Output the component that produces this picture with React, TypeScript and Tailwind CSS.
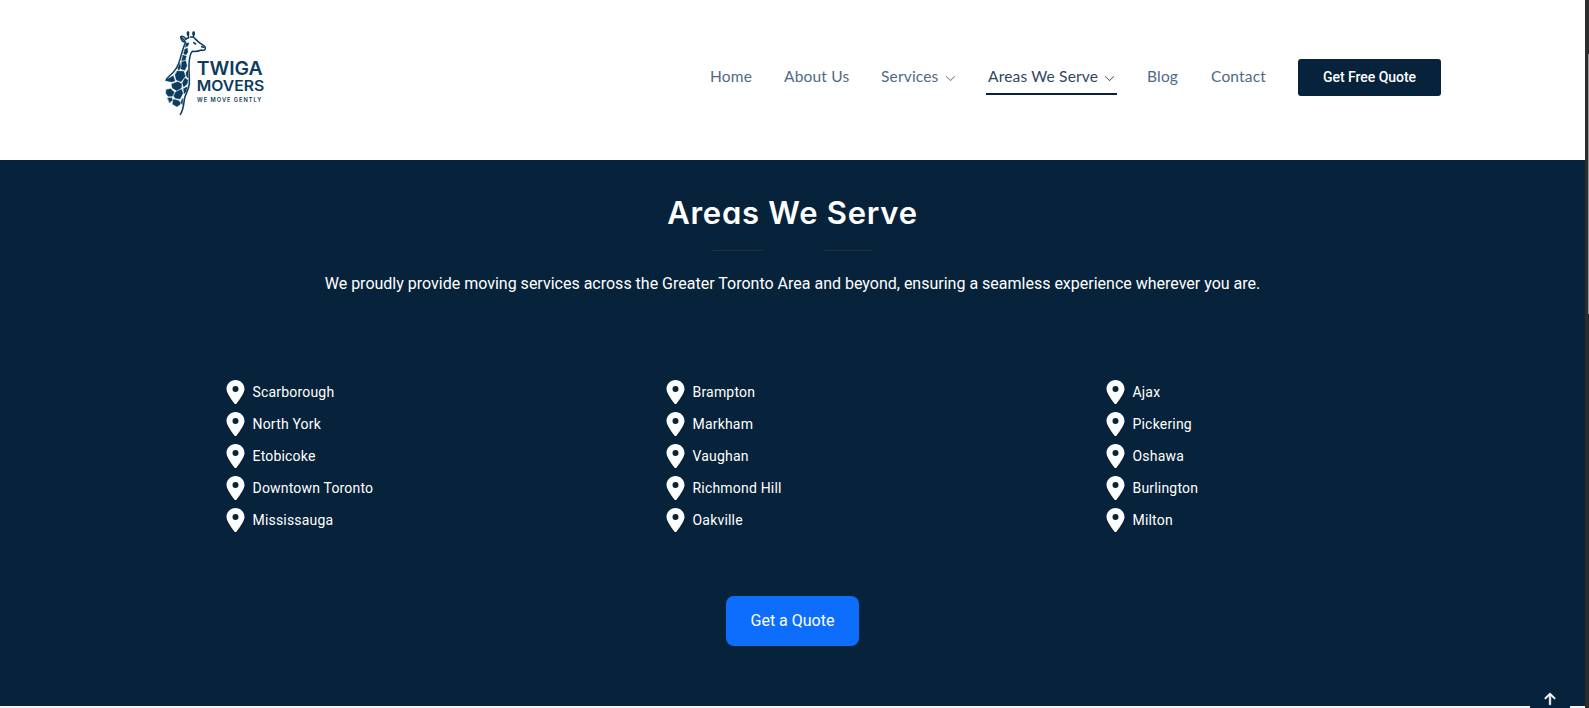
import { FaLocationDot } from "react-icons/fa6";
import { BsChevronDown, BsArrowUpShort } from "react-icons/bs";

const columns = [
  ["Scarborough", "North York", "Etobicoke", "Downtown Toronto", "Mississauga"],
  ["Brampton", "Markham", "Vaughan", "Richmond Hill", "Oakville"],
  ["Ajax", "Pickering", "Oshawa", "Burlington", "Milton"],
];

const links = [
  { label: "Home", box: "w-[42px]" },
  { label: "About Us", box: "w-[65px]" },
  { label: "Services", box: "w-[75px]", menu: true },
  { label: "Areas We Serve", box: "w-[131px] -mx-[2px] px-[2px]", menu: true, active: true },
  { label: "Blog", box: "w-[32px]" },
  { label: "Contact", box: "w-[55px]" },
];

function Logo() {
  return (
    <svg
      viewBox="0 0 360 315"
      className="h-[105px] w-[120px] shrink-0"
      fill="none"
      stroke="#0c3c60"
      strokeLinecap="round"
      strokeLinejoin="round"
    >
      <g strokeWidth="4.6">
        <path d="M93 58C87 48 79 48 77 51C78 61 84 67 92 66C86 78 81 96 75 118C68 145 57 157 43 168C37 173 34 177 33 181" />
        <path d="M93 56L101 53L99 39M107 51L116 52L115 39M118 54C124 60 131 68 142 74C149 78 152 81 151 86C149 92 143 92 139 90C130 94 119 95 112 94C104 100 103 115 102 133C101 157 104 174 103 191C102 209 91 221 88 238C86 254 85 270 76 283" />
        <path d="M79 53L89 62M116 68L122 72M140 80L145 82" />
      </g>
      <path d="M99 38v5M116 38v5" strokeWidth="8" />
      <g fill="#0c3c60" strokeWidth="1">
        <path d="M93 70L102 68L99 78L91 82Z" />
        <path d="M89 88L97 84L99 96L93 105L86 101ZM84 105L94 109L91 120L80 122Z" />
        <path d="M80 126L92 122L96 137L89 151L78 147ZM75 130L77 143L71 151L68 145Z" />
        <path d="M67 153L86 154L91 169L78 185L64 180L60 164ZM93 158L99 149L99 174L94 168Z" />
        <path d="M36 178L55 167L60 183L50 186L35 183ZM82 188L90 174L99 181L96 193L86 201Z" />
        <path d="M50 192L68 185L80 191L79 204L65 212L52 204Z" />
        <path d="M34 209L47 206L58 217L52 229L39 229L33 220ZM62 216L79 208L84 219L75 237L61 235L56 228ZM85 206L97 200L93 215L88 221Z" />
        <path d="M38 234L50 233L52 241L44 248ZM55 238L72 242L77 252L66 260L53 253ZM80 240L84 235L82 254L77 247Z" />
      </g>
      <g fill="#0c3c60" stroke="none" fontFamily="Inter, sans-serif">
        <text x="125" y="166" fontSize="55" fontWeight="600" textLength="198" lengthAdjust="spacingAndGlyphs">TWIGA</text>
        <text x="125" y="212" fontSize="42" fontWeight="600" textLength="203" lengthAdjust="spacingAndGlyphs">MOVERS</text>
        <text x="126" y="245" fontSize="17" fontWeight="600" textLength="193">WE MOVE GENTLY</text>
      </g>
    </svg>
  );
}

function Header() {
  return (
    <header className="flex h-40 items-start bg-white pl-[155px] pr-36 pt-5">
      <Logo />
      <div className="ml-auto mt-[39px] flex h-[37px] items-start">
        <nav className="mr-8 flex gap-8 font-['Lato',sans-serif] text-[15.5px] tracking-[0.18px] text-[#506a85]">
          {links.map((l) => (
            <a
              key={l.label}
              href="#"
              className={`flex h-[36px] items-center justify-between whitespace-nowrap border-b-2 pt-px ${l.box} ${
                l.active ? "border-[#07233b] text-[#2e475f]" : "border-transparent"
              }`}
            >
              {l.label}
              {l.menu && <BsChevronDown className="mt-[3px] size-[11px]" />}
            </a>
          ))}
        </nav>
        <a
          href="#"
          className="flex h-[37px] w-[143px] items-center justify-center rounded-[3px] bg-[#07233b] font-['Roboto',sans-serif] text-[14px] font-medium tracking-[-0.04px] text-white"
        >
          Get Free Quote
        </a>
      </div>
    </header>
  );
}

export default function App() {
  return (
    <div className="flex h-[708px] w-full overflow-hidden bg-[#f4f6fa] font-['Roboto',sans-serif]">
      <div className="relative w-[1585px] shrink-0">
        <Header />
        <main className="flex h-[546px] flex-col items-center bg-[#07233b] text-white">
          <h1 className="mt-8 whitespace-nowrap font-['Inter',sans-serif] text-[31px] font-semibold leading-[42px] tracking-[0.75px] [font-feature-settings:'cv11']">
            Areas We Serve
          </h1>
          <div className="mt-4 flex w-[160px] justify-between">
            <span className="h-px w-[50px] bg-[#22313d]" />
            <span className="h-px w-[50px] bg-[#22313d]" />
          </div>
          <p className="mt-[21px] text-[16px] leading-6">
            We proudly provide moving services across the Greater Toronto Area and beyond, ensuring a seamless
            experience wherever you are.
          </p>
          <div className="mt-[84px] grid w-[1320px] grid-cols-3">
            {columns.map((names) => (
              <ul key={names[0]} className="flex flex-col gap-2 pl-[93px]">
                {names.map((name) => (
                  <li key={name} className="flex h-6 items-center text-[14px] tracking-[0.19px]">
                    <FaLocationDot className="mr-2 h-6 w-[19px]" />
                    {name}
                  </li>
                ))}
              </ul>
            ))}
          </div>
          <a
            href="#"
            className="mt-16 flex h-[50px] w-[133px] items-center justify-center rounded-lg bg-[#0d6efd] text-[16px]"
          >
            Get a Quote
          </a>
        </main>
        <div className="absolute left-[1530px] top-[686px] flex h-10 w-10 justify-center rounded bg-[#07233b] text-white">
          <BsArrowUpShort className="mt-px size-6 stroke-white stroke-[0.4]" />
        </div>
      </div>
      <div className="flex h-full w-1 justify-end bg-[#2c2c2c] pt-[54px]">
        <span className="h-[260px] w-px bg-[#9a9a9a]" />
      </div>
    </div>
  );
}
